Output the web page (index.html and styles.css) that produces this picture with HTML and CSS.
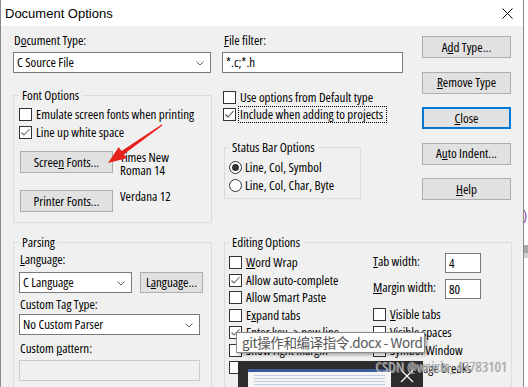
FILE: index.html
```html
<!DOCTYPE html>
<html lang="en">
<head>
    <meta charset="UTF-8">
    <title>Document Options</title>
    <link rel="stylesheet" href="styles.css">
</head>
<body>
    <div class="window">
        <div class="titlebar">
            <span class="title">Document Options</span>
            <svg class="close-x" width="11" height="11" viewBox="0 0 11 11"><path d="M0.5 0.5 L10.5 10.5 M10.5 0.5 L0.5 10.5" stroke="#000" stroke-width="1" fill="none"/></svg>
        </div>

        <div class="body">
            <div class="top-row">
                <div class="col-left">
                    <div class="label">D<u>o</u>cument Type:</div>
                    <div class="combo wide">C Source File<svg class="chev" width="8" height="5" viewBox="0 0 8 5"><path d="M0.5 0.5 L4 4 L7.5 0.5" stroke="#606060" fill="none"/></svg></div>

                    <fieldset class="group font-group">
                        <legend>Font Options</legend>
                        <label class="check"><span class="box"></span><span>Emulate screen fonts when printing</span></label>
                        <label class="check second"><span class="box"><svg width="11" height="11" viewBox="0 0 11 11"><path d="M1.5 5.5 L4 8 L9.5 2" stroke="#6a6a6a" stroke-width="1.1" fill="none"/></svg></span><span>Line up white space</span></label>
                        <div class="font-row first">
                            <button class="btn font-btn"><span>Scree<u>n</u> Fonts...</span></button>
                            <span class="font-name">Times New<br>Roman 14</span>
                        </div>
                        <div class="font-row">
                            <button class="btn font-btn"><span>Printer Fonts...</span></button>
                            <span class="font-name">Verdana 12</span>
                        </div>
                    </fieldset>
                </div>

                <div class="col-mid">
                    <div class="label"><u>F</u>ile filter:</div>
                    <div class="field">*.c;*.h</div>
                    <label class="check gap-top"><span class="box"></span><span>Use options from Default type</span></label>
                    <label class="check second-tight"><span class="box"><svg width="11" height="11" viewBox="0 0 11 11"><path d="M1.5 5.5 L4 8 L9.5 2" stroke="#4a4a4a" stroke-width="1.1" fill="none"/></svg></span><span class="focus">Include when adding to projects</span></label>

                    <fieldset class="group status-group">
                        <legend>Status Bar Options</legend>
                        <label class="radio"><span class="dot on"></span><span>Line, Col, Symbol</span></label>
                        <label class="radio second"><span class="dot"></span><span>Line, Col, Char, Byte</span></label>
                    </fieldset>
                </div>

                <div class="col-buttons">
                    <button class="btn"><span>A<u>d</u>d Type...</span></button>
                    <button class="btn"><span><u>R</u>emove Type</span></button>
                    <button class="btn default"><span><u>C</u>lose</span></button>
                    <button class="btn"><span>A<u>u</u>to Indent...</span></button>
                    <button class="btn"><span><u>H</u>elp</span></button>
                </div>
            </div>

            <div class="bottom-row">
                <fieldset class="group parsing-group">
                    <legend>Parsing</legend>
                    <div class="label"><u>L</u>anguage:</div>
                    <div class="lang-row">
                        <div class="combo lang">C Language<svg class="chev" width="8" height="5" viewBox="0 0 8 5"><path d="M0.5 0.5 L4 4 L7.5 0.5" stroke="#606060" fill="none"/></svg></div>
                        <button class="btn lang-btn"><span>L<u>a</u>nguage...</span></button>
                    </div>
                    <div class="label tag-label">Custom Tag T<u>y</u>pe:</div>
                    <div class="combo parser">No Custom Parser<svg class="chev" width="8" height="5" viewBox="0 0 8 5"><path d="M0.5 0.5 L4 4 L7.5 0.5" stroke="#606060" fill="none"/></svg></div>
                    <div class="label pattern-label">Custom <u>p</u>attern:</div>
                    <div class="field disabled"></div>
                </fieldset>

                <fieldset class="group editing-group">
                    <legend>Editing Options</legend>
                    <div class="edit-cols">
                        <div class="edit-left">
                            <label class="check"><span class="box"></span><span><u>W</u>ord Wrap</span></label>
                            <label class="check"><span class="box"><svg width="11" height="11" viewBox="0 0 11 11"><path d="M1.5 5.5 L4 8 L9.5 2" stroke="#6a6a6a" stroke-width="1.1" fill="none"/></svg></span><span>Allow auto-complete</span></label>
                            <label class="check"><span class="box"></span><span>Allow Smart Paste</span></label>
                            <label class="check"><span class="box"></span><span>E<u>x</u>pand tabs</span></label>
                            <label class="check"><span class="box"><svg width="11" height="11" viewBox="0 0 11 11"><path d="M1.5 5.5 L4 8 L9.5 2" stroke="#6a6a6a" stroke-width="1.1" fill="none"/></svg></span><span>Enter key -&gt; new line</span></label>
                            <label class="check"><span class="box"></span><span>Show right margin</span></label>
                            <label class="check"><span class="box"></span><span>Show line numbers</span></label>
                        </div>
                        <div class="edit-right">
                            <div class="num-row"><span class="num-label"><u>T</u>ab width:</span><span class="field num">4</span></div>
                            <div class="num-row"><span class="num-label"><u>M</u>argin width:</span><span class="field num">80</span></div>
                            <label class="check gap-top"><span class="box"></span><span><u>V</u>isible tabs</span></label>
                            <label class="check"><span class="box"></span><span>Visible spaces</span></label>
                            <label class="check"><span class="box"></span><span>Symbol Window</span></label>
                            <label class="check"><span class="box"></span><span>Show page breaks</span></label>
                        </div>
                    </div>
                </fieldset>
            </div>
        </div>
    </div>

    <!-- desktop bits showing past the window edge -->
    <div class="edge">
        <span class="edge-paren">)</span>
        <span class="edge-bar"></span>
    </div>

    <svg class="arrow" width="528" height="387" viewBox="0 0 528 387">
        <polygon points="108,163 118.7,146.9 121.5,151 161.6,124.4 162.4,125.6 123.9,154.2 126.7,158.3" fill="#e8221c"/>
    </svg>

    <div class="thumb">
        <div class="thumb-preview">
            <div class="thumb-ribbon"></div>
            <div class="thumb-lines"></div>
        </div>
        <div class="thumb-close">
            <svg width="14" height="14" viewBox="0 0 14 14"><path d="M1 1 L13 13 M13 1 L1 13" stroke="#fff" stroke-width="1.2" fill="none"/></svg>
        </div>
    </div>

    <div class="tooltip">git操作和编译指令.docx - Word</div>

    <div class="watermark">CSDN @weixin_43783101</div>
</body>
</html>
```

FILE: styles.css
```css
* {
    box-sizing: border-box;
}

body {
    margin: 0;
    width: 528px;
    height: 387px;
    overflow: hidden;
    position: relative;
    background: #fff;
    font-family: "Open Sans", "Liberation Sans", sans-serif;
    font-stretch: 75%;
    font-size: 13px;
    line-height: 15px;
    color: #000;
}

u {
    text-decoration-thickness: 1px;
    text-underline-offset: 1px;
}

.window {
    width: 524px;
    height: 387px;
    border-left: 1px solid #8a8a8a;
    border-right: 1px solid #8a8a8a;
    background: #f0f0f0;
}

.titlebar {
    height: 26px;
    background: #fff;
    display: flex;
    align-items: center;
    justify-content: space-between;
    padding: 0 10px 0 4px;
    font-family: "Liberation Sans", Arial, sans-serif;
    font-stretch: normal;
    font-size: 13px;
}

.close-x {
    margin-top: 1px;
}

.body {
    padding: 7px 0 0 12px;
}

.top-row {
    display: flex;
    align-items: flex-start;
}

.col-left {
    width: 199px;
}

.col-mid {
    width: 181px;
    margin-left: 10px;
}

.col-buttons {
    width: 89px;
    margin-left: 19px;
    padding-top: 3px;
    display: flex;
    flex-direction: column;
    gap: 13.5px;
}

.label {
    padding-left: 1px;
}

.col-mid > .label {
    padding-left: 2px;
}

/* controls */

.combo,
.field {
    height: 21px;
    margin-top: 4px;
    background: #fff;
    border: 1px solid #7a7a7a;
    padding: 2px 3px 0;
    position: relative;
    white-space: nowrap;
}

.combo.wide {
    width: 198px;
}

.chev {
    position: absolute;
    right: 6px;
    top: 8px;
}

.field.disabled {
    height: 21px;
    background: #f0f0f0;
    border-color: #cccccc;
}

.btn {
    height: 22px;
    padding: 0;
    margin: 0;
    background: #e1e1e1;
    border: 1px solid #adadad;
    font: inherit;
    color: #000;
    display: flex;
    align-items: center;
    justify-content: center;
    white-space: nowrap;
}

.btn.default {
    border: 2px solid #0078d7;
}

.check,
.radio {
    display: flex;
    align-items: center;
    height: 15px;
    gap: 4px;
    white-space: nowrap;
}

.box {
    width: 13px;
    height: 13px;
    flex: none;
    background: #fff;
    border: 1px solid #333;
    display: flex;
    align-items: center;
    justify-content: center;
}

.dot {
    width: 13px;
    height: 13px;
    flex: none;
    border-radius: 50%;
    background: #fff;
    border: 1px solid #333;
    display: flex;
    align-items: center;
    justify-content: center;
}

.dot.on::after {
    content: "";
    width: 7px;
    height: 7px;
    border-radius: 50%;
    background: #333;
}

.focus {
    outline: 1px dotted #000;
    padding: 0 3px 0 1px;
    margin-left: -1px;
}

/* group boxes */

.group {
    margin: 0;
    border: 1px solid #dcdcdc;
    padding: 0 5px 10px;
    min-width: 0;
}

.group legend {
    padding: 0 3px;
    line-height: 15px;
}

.font-group {
    margin-top: 15px;
    padding-top: 4px;
}

.check.second {
    margin-top: 3px;
}

.font-row {
    display: flex;
    align-items: flex-start;
    margin-top: 13px;
}

.font-row.first {
    margin-top: 11px;
}

.font-btn {
    width: 93px;
    margin-left: 1px;
}

.font-name {
    margin-left: 7px;
    line-height: 13px;
}

.col-mid .check {
    margin-left: 1px;
}

.check.gap-top {
    margin-top: 17px;
}

.check.second-tight {
    margin-top: 2px;
}

.status-group {
    width: 137px;
    margin-left: 2px;
    margin-top: 18px;
    padding: 5px 4px 5px;
}

.radio {
    gap: 3px;
}

.radio.second {
    margin-top: 3px;
}

/* lower half */

.bottom-row {
    display: flex;
    align-items: flex-start;
    margin-top: 12px;
}

.parsing-group {
    width: 199px;
    padding-top: 2px;
    height: 170px;
}

.lang-row {
    display: flex;
    gap: 8px;
    margin-top: 5px;
}

.combo.lang {
    width: 113px;
    margin-top: 0;
}

.lang-btn {
    width: 63px;
    height: 21px;
}

.tag-label {
    margin-top: 4px;
}

.combo.parser {
    width: 181px;
    margin-top: 2px;
}

.pattern-label {
    margin-top: 6px;
}

.parsing-group .field.disabled {
    width: 181px;
    margin-top: 4px;
}

.editing-group {
    width: 288px;
    margin-left: 12px;
    padding: 5px 4px 10px;
    height: 170px;
}

.edit-cols {
    display: flex;
    align-items: flex-start;
}

.edit-left {
    width: 144px;
    display: flex;
    flex-direction: column;
    gap: 2.5px;
}

.edit-right {
    margin-top: -2px;
    display: flex;
    flex-direction: column;
    gap: 3px;
}

.num-row {
    display: flex;
    align-items: flex-start;
}

.num-row + .num-row {
    margin-top: 3px;
}

.num-label {
    width: 72px;
    padding-top: 1px;
}

.field.num {
    width: 36px;
    height: 20px;
    margin-top: 0;
    padding-top: 2px;
}

.edit-right .check.gap-top {
    margin-top: 5px;
}

/* desktop behind the dialog */

.edge {
    position: absolute;
    left: 524px;
    top: 0;
    width: 4px;
    height: 387px;
    background: #fff;
}

.edge-paren {
    position: absolute;
    left: -1px;
    top: 207px;
    color: #7d3c98;
    font-size: 14px;
}

.edge-bar {
    position: absolute;
    left: 0;
    top: 245px;
    width: 4px;
    height: 13px;
    background: linear-gradient(#a8a8a8 60%, #cfcfcf 60%);
}

/* overlays */

.arrow {
    position: absolute;
    left: 0;
    top: 0;
    pointer-events: none;
}

.tooltip {
    position: absolute;
    left: 236px;
    top: 332px;
    width: 189px;
    height: 21px;
    background: #fdfdfd;
    border: 1px solid #8a8a8a;
    box-shadow: 2px 2px 3px rgba(0, 0, 0, 0.3);
    padding: 0 0 0 5px;
    font-family: "Noto Sans CJK SC", "Noto Sans", sans-serif;
    font-stretch: normal;
    font-size: 13.5px;
    letter-spacing: -0.4px;
    line-height: 19px;
    color: #575757;
    white-space: nowrap;
}

.thumb {
    position: absolute;
    left: 238px;
    top: 361px;
    width: 185px;
    height: 30px;
    background: #2d2d2d;
    display: flex;
    padding: 8px 0 0 10px;
}

.thumb-preview {
    width: 143px;
    background: #f4f4f4;
}

.thumb-ribbon {
    height: 3px;
    background: #3b5b9b;
}

.thumb-lines {
    height: 10px;
    margin: 3px 6px 0;
    background: repeating-linear-gradient(#c5cde0 0 1px, transparent 1px 3px);
}

.thumb-close {
    flex: 1;
    margin-top: -8px;
    display: flex;
    align-items: center;
    justify-content: center;
}

.watermark {
    position: absolute;
    left: 375px;
    top: 359px;
    font-size: 15px;
    color: rgba(175, 175, 175, 0.95);
    text-shadow: 1px 1px 0 rgba(255, 255, 255, 0.5), 0 0 1px rgba(60, 60, 60, 0.5);
    white-space: nowrap;
}
```
